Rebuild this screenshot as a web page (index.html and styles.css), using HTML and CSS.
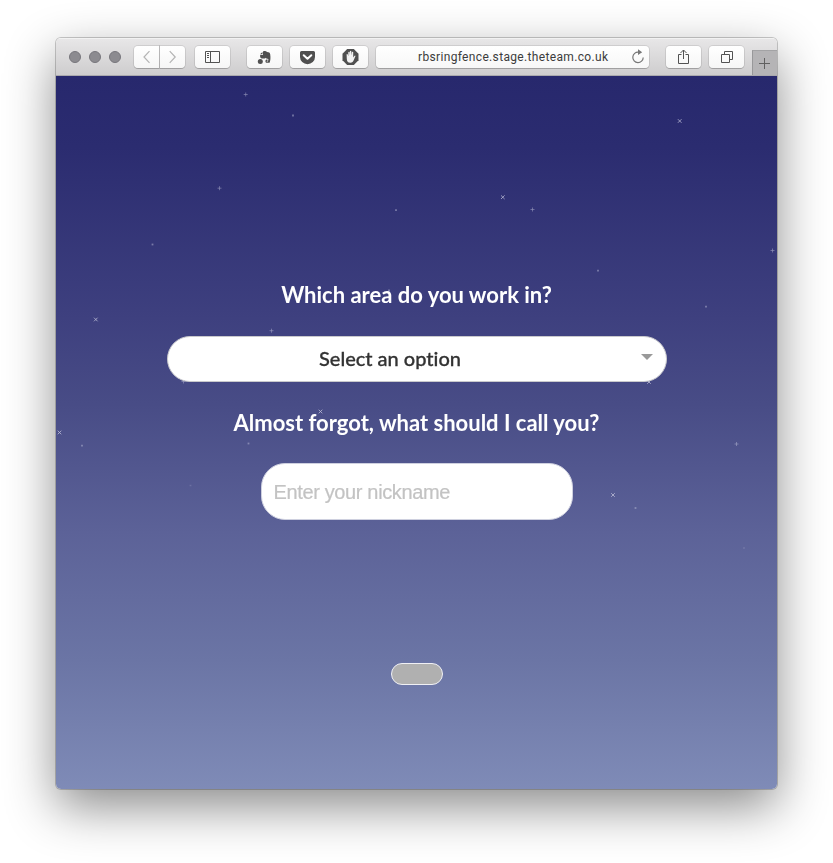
FILE: index.html
```html
<!DOCTYPE html>
<html lang="en">
<head>
<meta charset="utf-8">
<title>rbsringfence.stage.theteam.co.uk</title>
<link rel="stylesheet" href="styles.css">
</head>
<body>
<div class="window">
  <header class="toolbar">
    <div class="lights"><i class="light"></i><i class="light"></i><i class="light"></i></div>
    <div class="history">
      <button class="btn nav back"><svg width="25" height="22" viewBox="0 0 25 22"><path class="faint" d="M15.500 5.200 10 11l5.500 5.800"/></svg></button>
      <button class="btn nav"><svg width="25" height="22" viewBox="0 0 25 22"><path class="faint" d="M9.700 5.200 15.200 11l-5.500 5.800"/></svg></button>
    </div>
    <button class="btn sidebar"><svg width="35" height="22" viewBox="0 0 35 22"><path class="line" d="M10.500 5.500h14v11h-14zM15.500 5.500v11M12 7.500h2M12 9.500h2M12 11.500h2"/></svg></button>
    <div class="extensions">
      <button class="btn"><svg width="35" height="22" viewBox="0 0 35 22"><path class="solid" d="M13 8.200 15.500 6v2.200zM16 5.500c2-.8 3.200-.3 4 .6 2 .1 3 .7 3.200 2.200.5 3.200.3 6.500-.6 8.500h-3.500c-1-.6-.9-3 .4-3.200h1v1.300h-.8v.6h1.300l.4-2.600c-1.400-.2-2.500-.5-2.900-1.200-.5 1-2.500 1-3.800.8-1.500-.4-1.800-2-1.500-3.500h2.800z"/><circle class="solid" cx="13.300" cy="15.500" r="2.500"/></svg></button>
      <button class="btn"><svg width="35" height="22" viewBox="0 0 35 22"><path class="solid" d="M11.500 5h12q1.500 0 1.500 1.500V11a7.500 7.200 0 0 1-15 0V6.500Q10 5 11.500 5z"/><path class="check" d="m13.700 9.200 3.800 3.600 3.800-3.600"/></svg></button>
      <button class="btn"><svg width="35" height="22" viewBox="0 0 35 22"><path class="solid" d="M14.200 3h6.600l4.700 4.700v6.600L20.800 19h-6.600l-4.700-4.700V7.700z"/><path class="hand" d="M13.600 8.200q.7-.6 1.200.2l.5 2V6.200q.7-.7 1.300 0V9.500l.3-4.300q.7-.8 1.400 0l.1 4.300.5-3.600q.8-.6 1.300.2v5.300l1.100-1.500q.9-.6 1.200.1l-1.600 3.800c-.7 2-1.700 3-3.500 3-2.600 0-3.500-1.500-3.600-4z"/></svg></button>
    </div>
    <div class="address"><span class="url">rbsringfence.stage.theteam.co.uk</span><svg class="reload" width="16" height="18" viewBox="0 0 16 18"><path class="arc" d="M8.500 4.200A5.200 5.200 0 1 0 13.200 9.400"/><path class="tip" d="M8 1.200 12.200 4.200 8 7z"/></svg></div>
    <button class="btn share"><svg width="35" height="22" viewBox="0 0 35 22"><path class="line" d="M15.500 8.500h-3v9h10v-9h-3M17.500 13V4.200M14.500 7l3-3 3 3"/></svg></button>
    <button class="btn tabs"><svg width="35" height="22" viewBox="0 0 35 22"><path class="line" d="M12.500 8.500h8v8h-8zM15.500 8.500v-3h8v8h-3"/></svg></button>
    <button class="newtab"><svg width="24" height="24" viewBox="0 0 24 24"><path class="plus" d="M6 12.500h11M11.500 7v11"/></svg></button>
  </header>
  <main class="page">
    <svg class="stars" viewBox="56 76 721 713">
      <defs>
        <path id="p" d="M-2 0H2M0-2V2"/>
        <path id="x" d="M-1.800-1.800 1.800 1.800M1.800-1.800-1.800 1.800"/>
        <path id="d" d="M-.9 0H.9"/>
      </defs>
      <g class="star plus-star">
        <use href="#p" x="245.700" y="94.500"/><use href="#p" x="219.500" y="188.200"/><use href="#p" x="532.500" y="209.500"/><use href="#p" x="772.500" y="250.500"/><use href="#p" x="271.500" y="330.700"/><use href="#p" x="183.500" y="381.500"/><use href="#p" x="736.500" y="444"/>
      </g>
      <g class="star">
        <use href="#x" x="679.700" y="121"/><use href="#x" x="502.800" y="197.200"/><use href="#x" x="95.800" y="319.500"/><use href="#x" x="59.500" y="432.500"/><use href="#x" x="320.500" y="411.500"/><use href="#x" x="649" y="382"/><use href="#x" x="613" y="495"/>
      </g>
      <g class="dot">
        <use href="#d" x="293" y="115.500"/><use href="#d" x="396" y="210.200"/><use href="#d" x="152.500" y="244.500"/><use href="#d" x="598" y="270.700"/><use href="#d" x="706" y="306.700"/><use href="#d" x="389" y="290.500"/><use href="#d" x="82" y="445.700"/><use href="#d" x="248.500" y="443.500"/><use href="#d" x="635.500" y="508"/>
      </g>
      <g class="dim"><use href="#d" x="190.500" y="485.500"/><use href="#d" x="744" y="548"/></g>
    </svg>
    <form class="form">
      <h2 class="question area">Which area do you work in?</h2>
      <div class="select"><span class="choice">Select an option</span><svg class="caret" width="12" height="6" viewBox="0 0 12 6"><path d="M0 0h12L6 6z"/></svg></div>
      <h2 class="question name">Almost forgot, what should I call you?</h2>
      <input class="nickname" type="text" placeholder="Enter your nickname">
      <button class="submit" type="button"></button>
    </form>
  </main>
</div>
</body>
</html>
```

FILE: styles.css
```css
* { box-sizing: border-box; }
body { margin: 0; background: #fff; height: 863px; overflow: hidden; display: flex; justify-content: center; align-items: flex-start; }
button { padding: 0; border: 0; font: inherit; flex: none; }
svg { display: block; fill: none; }
.window {
  width: 721px; height: 751px; margin-top: 38px; border-radius: 5px; overflow: hidden;
  display: flex; flex-direction: column;
  box-shadow: 0 0 0 1px rgba(0,0,0,.2), 0 18px 50px rgba(0,0,0,.46);
}
.toolbar {
  height: 38px; flex: none; display: flex; align-items: flex-start; padding: 8px 0 0 13px;
  background: linear-gradient(#e8e7e8, #cecdce); border-bottom: 1px solid #aaa9ad;
  box-shadow: inset 0 1px #f2f2f2;
}
.lights { display: flex; gap: 8px; margin-top: 5px; }
.light { width: 12px; height: 12px; border-radius: 50%; background: #8c8b90; border: 1px solid #77767c; }
.btn { width: 35px; height: 22px; border-radius: 4px; background: linear-gradient(#fff, #f6f6f6); box-shadow: 0 0 0 1px rgba(0,0,0,.09), 0 1px rgba(0,0,0,.16); }
.history { display: flex; gap: 1px; margin-left: 13px; }
.nav { width: 25px; border-radius: 0 4px 4px 0; }
.back { border-radius: 4px 0 0 4px; }
.sidebar { margin-left: 10px; }
.extensions { display: flex; gap: 8px; margin-left: 17px; }
.address {
  width: 273px; height: 22px; flex: none; margin-left: 8px; padding-left: 42px; border-radius: 4px;
  display: flex; align-items: center; background: linear-gradient(#fff, #f7f7f7);
  box-shadow: 0 0 0 1px rgba(0,0,0,.09), 0 1px rgba(0,0,0,.16);
}
.url { width: 191px; font: 12px/22px Roboto, sans-serif; letter-spacing: .34px; color: #3c3c3c; white-space: nowrap; }
.reload { margin-left: 21px; }
.share { margin-left: 17px; }
.tabs { margin-left: 8px; }
.newtab { width: 25px; height: 25px; margin: 4px 0 0 auto; background: #b5b4b6; border-left: 1px solid #98989a; border-top: 1px solid #a3a3a5; }
.line { stroke: #525252; stroke-width: 1; }
.faint { stroke: #b4b4b4; stroke-width: 1.2; }
.solid { fill: #505050; }
.check { stroke: #fff; stroke-width: 2; stroke-linecap: round; stroke-linejoin: round; }
.hand { fill: #f3f3f3; }
.arc { stroke: #777; stroke-width: 1.2; }
.tip { fill: #777; }
.plus { stroke: #606060; stroke-width: 1; }
.page {
  flex: 1; position: relative;
  background: linear-gradient(#27286d 0%, #2b2c70 10%, #3e407f 34%, #484c86 46%, #5c6298 64%, #6b75a5 82%, #7f8bb7 100%);
}
.stars { position: absolute; top: 0; left: 0; width: 721px; height: 713px; }
.star { stroke: #d0d1e4; stroke-width: .8; opacity: .85; }
.plus-star { stroke-width: .65; opacity: .6; }
.dot { stroke: #bdbed8; stroke-width: 1.8; opacity: .5; }
.dim { stroke: #bdbed8; stroke-width: 1.5; opacity: .22; }
.form { position: relative; display: flex; flex-direction: column; align-items: center; padding-top: 204px; }
.question { margin: 0; font: 700 22px/30px Lato, sans-serif; color: #fff; white-space: nowrap; }
.select {
  width: 500px; height: 46px; margin: 26px 0; padding: 0 13px 0 22px; border-radius: 23px;
  display: flex; align-items: center; background: #fff; border: 1px solid #c9c9cc;
}
.choice {
  flex: 1; padding-right: 50px; margin-top: -2px; text-align: center; font: 500 20px/44px Lato, sans-serif;
  font-variant-ligatures: none; color: #333; -webkit-text-stroke: .3px #333;
}
.caret { fill: #999; margin-top: -5px; }
.nickname {
  width: 312px; height: 57px; margin-top: 25px; padding: 2px 12px 0; border: 1px solid #ced0df; border-radius: 24px;
  background: #fff; font: 20px "Liberation Sans", sans-serif; letter-spacing: -.36px; color: #333; outline: 0;
}
.nickname::placeholder { color: #c3c3c3; opacity: 1; -webkit-text-stroke: .2px #c3c3c3; }
.submit { width: 52px; height: 22px; margin: 143px 0 0 1px; border: 1px solid #f0f0f4; border-radius: 11px; background: #b0b0b0; }
```
